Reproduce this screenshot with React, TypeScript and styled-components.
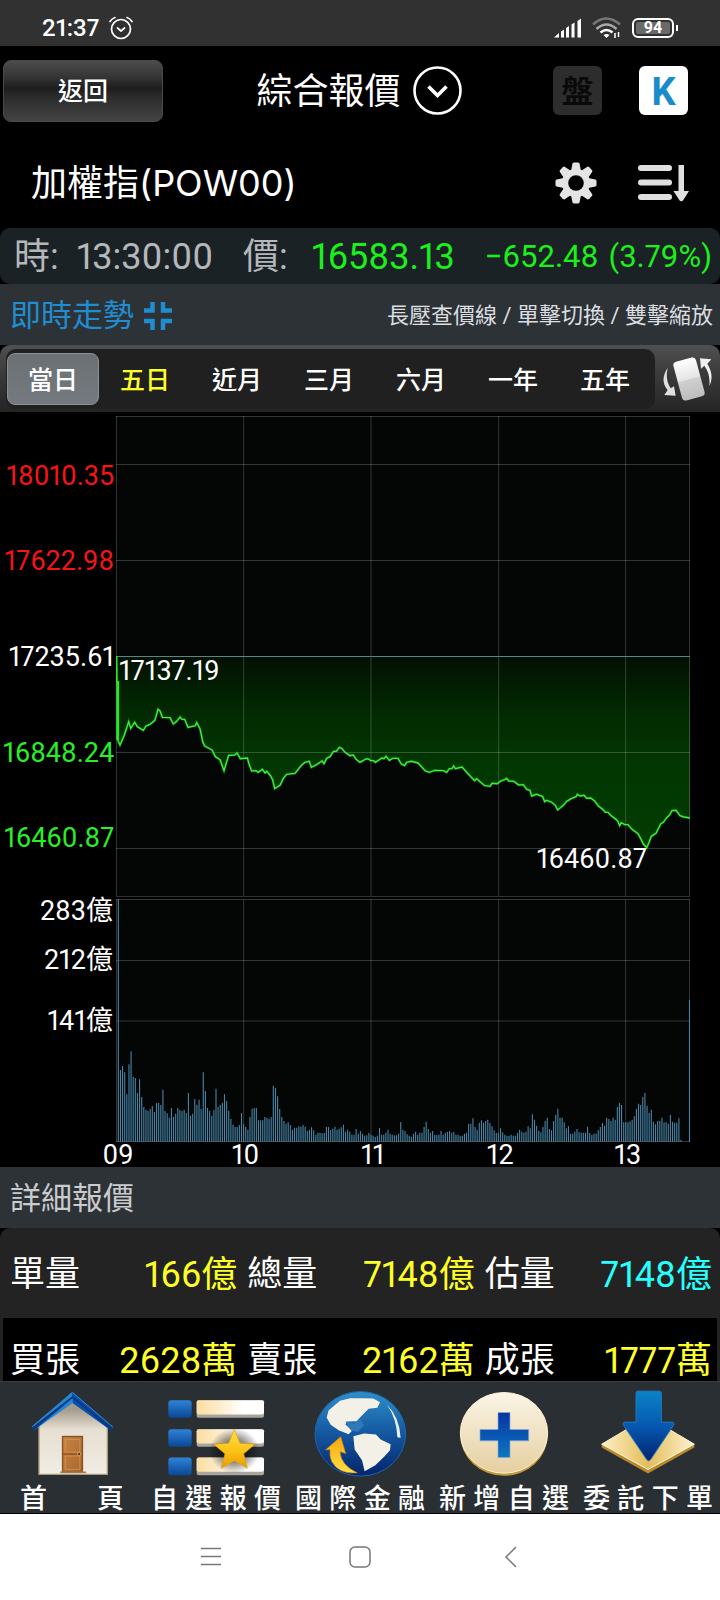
import React, { useState } from "react";
import styled, { createGlobalStyle } from "styled-components";

const GlobalStyle = createGlobalStyle`
  *, *::before, *::after { box-sizing: border-box; }
  body {
    margin: 0;
    background: #000;
    color: #fff;
    font-family: Roboto, "Noto Sans CJK TC", sans-serif;
    font-variant-numeric: proportional-nums;
  }
  button { font: inherit; color: inherit; background: none; border: 0; padding: 0; cursor: pointer; }
  h1, h2, p, dl, dt, dd { margin: 0; font-weight: 400; }
  svg { display: block; flex: none; }
`;

const Screen = styled.div`
  display: flex;
  flex-direction: column;
  min-height: 100vh;
  background: #000;
`;

/* ---------- status bar ---------- */

const StatusBar = styled.div`
  display: flex;
  align-items: center;
  justify-content: space-between;
  height: 46px;
  padding: 10px 42px 0 42px;
  background: #313131;
`;

const StatusGroup = styled.div<{ $gap: number }>`
  display: flex;
  align-items: center;
  gap: ${(p) => p.$gap}px;
`;

const Clock = styled.span`
  font-size: 24px;
  line-height: 32px;
  font-weight: 500;
`;

const Battery = styled.div`
  position: relative;
  display: flex;
  align-items: center;
  justify-content: center;
  width: 42px;
  height: 20px;
  margin-right: 4px;
  border: 2px solid #fff;
  border-radius: 6px;
  background: #6a6a6a;
  box-shadow: inset 0 0 0 2px #313131;
  font-size: 16px;
  line-height: 16px;
  font-weight: 700;
  &::after {
    content: "";
    position: absolute;
    right: -6px;
    width: 2px;
    height: 6px;
    background: #fff;
  }
`;

/* ---------- title area ---------- */

const Header = styled.header`
  display: grid;
  grid-template-columns: 1fr auto 1fr;
  align-items: center;
  height: 89px;
  padding: 0 3px;
`;

const BackButton = styled.button`
  width: 160px;
  height: 62px;
  padding-top: 3px;
  border: 1px solid #4a4a4a;
  border-radius: 8px;
  background: linear-gradient(#4c4c4c, #363636 25%, #1d1d1d 46%, #2a2a2a 58%, #444);
  font-size: 25px;
  line-height: 32px;
  font-weight: 500;
`;

const TitleGroup = styled.div`
  display: flex;
  align-items: center;
  gap: 12px;
  padding-right: 2px;
`;

const Title = styled.h1`
  padding-top: 3px;
  font-size: 36px;
  line-height: 48px;
`;

const SymbolName = styled.h2`
  font-family: Inter, "Noto Sans CJK TC", sans-serif;
  font-size: 36px;
  line-height: 48px;
`;

const Actions = styled.div<{ $gap: number; $end?: number }>`
  display: flex;
  align-items: center;
  justify-content: flex-end;
  gap: ${(p) => p.$gap}px;
  padding-right: ${(p) => p.$end ?? 0}px;
`;

const SquareButton = styled.button<{ $active?: boolean }>`
  display: flex;
  align-items: center;
  justify-content: center;
  width: 49px;
  height: 49px;
  padding-top: 2px;
  border-radius: 6px;
  background: ${(p) => (p.$active ? "#fff" : "#2d2d2d")};
  color: ${(p) => (p.$active ? "#1a8bcb" : "#0a0a0a")};
  font-size: ${(p) => (p.$active ? 38 : 32)}px;
  line-height: 48px;
  font-weight: 700;
`;

const SymbolRow = styled.div`
  display: flex;
  align-items: center;
  justify-content: space-between;
  height: 93px;
  padding: 2px 30px 0 31px;
`;

const QuoteBar = styled.div`
  display: flex;
  align-items: center;
  justify-content: space-between;
  height: 56px;
  padding: 2px 8px 0 14px;
  border-radius: 10px;
  background: #1b2226;
  color: #b4b8bb;
  font-size: 36px;
  line-height: 48px;
  white-space: nowrap;
`;

const QuoteItem = styled.span<{ $gap: number }>`
  display: flex;
  gap: ${(p) => p.$gap}px;
`;

const Price = styled.span`
  color: #1cf01c;
`;

const Change = styled(QuoteItem)`
  color: #1cf01c;
  font-size: 31px;
`;

/* ---------- section bars and range tabs ---------- */

const SectionBar = styled.div`
  display: flex;
  align-items: center;
  justify-content: space-between;
  height: 61px;
  padding: 2px 7px 0 10px;
  background: #2d3237;
`;

const SectionTitle = styled.h2<{ $accent?: boolean }>`
  display: flex;
  align-items: center;
  gap: 10px;
  color: ${(p) => (p.$accent ? "#1f8dd0" : "#c9cbcd")};
  font-size: 31px;
  line-height: 48px;
`;

const Hint = styled.p`
  color: #dcdee0;
  font-size: 22px;
  line-height: 32px;
`;

const RangeBar = styled.div`
  display: flex;
  align-items: center;
  height: 67px;
  padding: 0 7px 0 6px;
  border-radius: 10px 10px 0 0;
  background: linear-gradient(#505050, #3c3c3c 40%, #242424);
`;

const RangeTabs = styled.div`
  display: flex;
  flex: 1;
  height: 60px;
  padding: 4px 4px 4px 1px;
  border-radius: 10px;
  background: #202020;
`;

const RangeTab = styled.button<{ $selected: boolean; $highlight?: boolean }>`
  flex: 1;
  padding-top: 5px;
  border: 1px solid ${(p) => (p.$selected ? "#8b9094" : "transparent")};
  border-radius: 8px;
  background: ${(p) => (p.$selected ? "linear-gradient(#6b7074, #747a7f)" : "none")};
  color: ${(p) => (p.$highlight ? "#ffff28" : "#fff")};
  font-size: 25px;
  line-height: 32px;
  font-weight: 500;
`;

const RotateButton = styled.button`
  margin-left: 7px;
`;

/* ---------- charts ---------- */

const ChartRow = styled.div<{ $top: number }>`
  display: grid;
  grid-template-columns: 116px 1fr;
  padding-right: 30px;
  padding-top: ${(p) => p.$top}px;
`;

const AxisLabels = styled.div<{ $rows: string; $pad: number }>`
  display: grid;
  grid-template-rows: ${(p) => p.$rows};
  align-items: center;
  justify-items: end;
  padding: ${(p) => p.$pad}px 3px;
`;

const AxisLabel = styled.span<{ $color?: string }>`
  color: ${(p) => p.$color ?? "#fff"};
  font-size: 27px;
  line-height: 24px;
  white-space: nowrap;
`;

const Plot = styled.div<{ $height: number }>`
  position: relative;
  height: ${(p) => p.$height}px;
  svg { width: 100%; height: 100%; }
  svg * { vector-effect: non-scaling-stroke; }
`;

const HighMark = styled.span`
  position: absolute;
  left: 3px;
  top: 243px;
  font-size: 27px;
  line-height: 24px;
`;

const LowMark = styled(HighMark)`
  left: auto;
  right: 43px;
  top: 431px;
`;

const TimeAxis = styled.div`
  display: grid;
  grid-template-columns: repeat(5, 22.2%);
  margin: 0 28px 0 118px;
  height: 25px;
  padding-top: 1px;
`;

const TimeLabel = styled.span`
  transform: translateX(-50%);
  text-align: center;
  font-size: 27px;
  line-height: 24px;
`;

/* ---------- detail table ---------- */

const DetailPanel = styled.div`
  padding: 0 3px;
  border-radius: 10px 10px 0 0;
  background: #232323;
`;

const DetailRow = styled.dl<{ $dark?: boolean }>`
  display: grid;
  grid-template-columns: repeat(3, 1fr);
  column-gap: 10px;
  align-items: center;
  height: ${(p) => (p.$dark ? 63 : 90)}px;
  padding: ${(p) => (p.$dark ? 22 : 4)}px 5px 0 7px;
  background: ${(p) => (p.$dark ? "#000" : "none")};
  font-size: 35px;
  line-height: 40px;
`;

const DetailCell = styled.div`
  display: flex;
  align-items: center;
  justify-content: space-between;
  white-space: nowrap;
`;

const DetailValue = styled.dd<{ $color: string }>`
  color: ${(p) => p.$color};
  font-size: 36px;
`;

/* ---------- bottom bars ---------- */

const TabBar = styled.nav`
  display: grid;
  grid-template-columns: repeat(5, 1fr);
  height: 133px;
  padding-top: 8px;
  border-top: 1px solid #3a3f44;
  border-bottom: 1px solid #000;
  background: #2a2f33;
`;

const TabLink = styled.a<{ $inset?: number }>`
  display: flex;
  flex-direction: column;
  align-items: center;
  gap: 6px;
  padding: 0 ${(p) => p.$inset ?? 7}px;
  color: #fff;
  text-decoration: none;
  font-size: 27px;
  line-height: 32px;
  font-weight: 500;
  span { align-self: stretch; text-align: justify; text-align-last: justify; }
`;

const SystemNav = styled.div`
  display: flex;
  align-items: center;
  justify-content: space-around;
  flex: 1;
  min-height: 86px;
  padding: 0 136px;
  background: #fff;
`;

/* ---------- icons ---------- */

const AlarmIcon = () => (
  <svg width="24" height="24" viewBox="0 0 24 24" fill="none" stroke="#fff" strokeWidth="1.700" strokeLinecap="round" strokeLinejoin="round">
    <circle cx="12" cy="13" r="9.5" />
    <path d="M8.500 12l3.500 3 3.500-3M1 5.500q2-3 5-4M23 5.500q-2-3-5-4" />
  </svg>
);

const SignalIcon = () => (
  <svg width="28" height="20" viewBox="0 0 28 20" fill="#fff">
    <path d="M0 19.500L5 15v4.500zM7 13.500l3-2v8H7zM12 10l3-2v11.500h-3zM17.500 6.500l3-2v15h-3zM23.500 3l3.500-2.500v19h-3.500z" />
  </svg>
);

const WifiIcon = () => (
  <svg width="30" height="22" viewBox="0 0 30 22" fill="none" strokeWidth="2.600">
    <path d="M1 7.500q13-12 27 0" stroke="#777" />
    <path d="M4.500 12q10-9 20 0" stroke="#aaa" />
    <path d="M8.500 15.500q6-5 12 0" stroke="#fff" />
    <path d="M11.500 18q3-2 6 0l-3 3z" fill="#fff" />
    <path d="M23 16v5M26.500 15v5" stroke="#fff" strokeWidth="1.500" />
  </svg>
);

const ChevronCircle = () => (
  <svg width="49" height="49" viewBox="0 0 49 49" fill="none" stroke="#fff">
    <circle cx="24.500" cy="24.500" r="23" strokeWidth="2.600" />
    <path d="M15.500 20.500l9 9 9-9" strokeWidth="3.600" />
  </svg>
);

const GearIcon = () => (
  <svg width="42" height="42" viewBox="-21 -21 42 42" fill="#e4e4e4">
    {[0, 45, 90, 135].map((a) => (
      <path key={a} transform={`rotate(${a})`} d="M-5 -12L-3.500 -19.500Q-3 -20.500 -2 -20.500H2Q3 -20.500 3.500 -19.500L5 -12V12L3.500 19.500Q3 20.500 2 20.500H-2Q-3 20.500 -3.500 19.500L-5 12z" />
    ))}
    <circle r="14" />
    <circle r="7.800" fill="#000" />
  </svg>
);

const SortIcon = () => (
  <svg width="52" height="38" viewBox="0 0 52 38" fill="#e0e0e0">
    <rect x="0" y="1" width="34" height="6" rx="3" />
    <rect x="0" y="15.500" width="34" height="6" rx="3" />
    <rect x="0" y="30" width="34" height="6" rx="3" />
    <path d="M40.500 1h5.500v26h5L45 36.500q-1.700 1.500-3.400 0L35.500 27h5z" />
  </svg>
);

const CollapseIcon = () => (
  <svg width="28" height="28" viewBox="0 0 28 28" fill="none" stroke="#1f8dd0" strokeWidth="4.500">
    <path d="M8.500 0v8.500H0M19 0v8.500h9M8.500 28v-9H0M19 28v-9h9" />
  </svg>
);

const RotateIcon = () => (
  <svg width="51" height="49" viewBox="905 402 153 147">
    <defs>
      <linearGradient id="device" x1="0" y1="0" x2="0" y2="1">
        <stop offset="0" stopColor="#fff" />
        <stop offset="0.500" stopColor="#e4e4e4" />
        <stop offset="0.520" stopColor="#cfcfcf" />
        <stop offset="1" stopColor="#bdbdbd" />
      </linearGradient>
    </defs>
    <rect x="951" y="417" width="70" height="120" rx="11" transform="rotate(-15 986 477)" fill="url(#device)" />
    <path d="M922 443Q897 482 922 510L912 525L946 527L941 499L931 505Q914 480 922 443z" fill="#e0e0e0" />
    <path d="M1047 498Q1063 467 1041 431L1053 418L1019 415L1022 446L1032 437Q1051 462 1047 498z" fill="#f0f0f0" />
  </svg>
);

const HomeIcon = () => (
  <svg width="83" height="87" viewBox="90 60 250 260">
    <defs>
      <linearGradient id="wall" x1="0" y1="0" x2="0" y2="1">
        <stop offset="0.150" stopColor="#a39c8e" />
        <stop offset="0.420" stopColor="#e6dfd2" />
        <stop offset="1" stopColor="#f1ede3" />
      </linearGradient>
      <linearGradient id="door" x1="0" y1="0" x2="1" y2="1">
        <stop offset="0" stopColor="#c98545" />
        <stop offset="1" stopColor="#a8662b" />
      </linearGradient>
    </defs>
    <path d="M114 165L215 82L320 165V313H114z" fill="url(#wall)" stroke="#a99c7b" strokeWidth="4" />
    <path d="M94 169L215 65V98L98 181z" fill="#2485d3" />
    <path d="M215 65L337 171L332 182L215 98z" fill="#0a4fae" />
    <path d="M98 181L215 84L332 182L337 173L215 77L94 171z" fill="#063b83" />
    <path d="M94 169L215 66L337 171" fill="none" stroke="#2f8cd6" strokeWidth="3" />
    <rect x="185" y="199" width="60" height="107" fill="url(#door)" stroke="#8a4f1c" strokeWidth="4" />
    <path d="M193 208h44v38h-44zM193 258h44v40h-44z" fill="none" stroke="#d79b5d" strokeWidth="2" />
    <path d="M187 252h44" stroke="#7c4517" strokeWidth="3" />
    <circle cx="235" cy="252" r="5" fill="#5c3310" stroke="#e6c08c" strokeWidth="2" />
    <path d="M178 307h78" stroke="#a57c4b" strokeWidth="5" />
  </svg>
);

const STAR = "M703 178L720 219L765 222L731 251L742 294L703 272L664 294L675 251L641 222L686 219z";

const ListIcon = () => (
  <svg width="98" height="87" viewBox="501 60 294 260">
    <defs>
      <linearGradient id="tile" x1="0" y1="0" x2="0" y2="1">
        <stop offset="0" stopColor="#2f83d8" />
        <stop offset="1" stopColor="#0b4794" />
      </linearGradient>
      <linearGradient id="strip">
        <stop offset="0.050" stopColor="#fbdfa6" />
        <stop offset="0.700" stopColor="#fff" />
      </linearGradient>
      <linearGradient id="star" x1="0" y1="0" x2="0" y2="1">
        <stop offset="0" stopColor="#ffe14a" />
        <stop offset="0.600" stopColor="#fbbf12" />
        <stop offset="1" stopColor="#e39b05" />
      </linearGradient>
      <radialGradient id="starShade">
        <stop offset="0.500" stopColor="#000" stopOpacity="0.450" />
        <stop offset="1" stopColor="#000" stopOpacity="0" />
      </radialGradient>
    </defs>
    {[90, 177, 262].map((y) => (
      <g key={y}>
        <rect x="505" y={y} width="70" height="53" rx="9" fill="url(#tile)" />
        <rect x="590" y={y} width="202" height="53" rx="6" fill="#a8a59d" />
        <rect x="590" y={y} width="202" height="43" rx="6" fill="url(#strip)" />
      </g>
    ))}
    <ellipse cx="703" cy="242" rx="76" ry="68" fill="url(#starShade)" />
    <path d={STAR} fill="url(#star)" stroke="#e4a10a" strokeWidth="2" strokeLinejoin="round" />
  </svg>
);

const GlobeIcon = () => (
  <svg width="93" height="87" viewBox="940 60 279 260">
    <defs>
      <linearGradient id="sea" x1="0" y1="0" x2="0" y2="1">
        <stop offset="0" stopColor="#2e8fc9" />
        <stop offset="0.500" stopColor="#14579f" />
        <stop offset="1" stopColor="#04246b" />
      </linearGradient>
      <linearGradient id="curl" x1="0" y1="0" x2="0" y2="1">
        <stop offset="0" stopColor="#f6a80a" />
        <stop offset="1" stopColor="#ffe04a" />
      </linearGradient>
    </defs>
    <ellipse cx="1079" cy="191" rx="136" ry="127" fill="url(#sea)" stroke="#1c64ad" strokeWidth="3" />
    <path d="M1018 92L1048 84H1088L1118 85L1138 96L1130 113L1104 116L1083 137L1068 153L1040 154L1034 162L1054 182L1044 192L1014 180L990 164L978 142L984 120z" fill="#f3f0e8" />
    <path d="M1058 198L1090 190L1126 193L1140 208L1170 222L1168 240L1152 258L1124 285L1092 303L1084 270L1062 238z" fill="#f3f0e8" />
    <path d="M1034 153L1058 160L1080 147L1090 165L1072 185L1052 182z" fill="#2f79b8" />
    <path d="M1159 104Q1196 140 1200 203L1190 201Q1188 145 1159 104z" fill="#e6f3fb" />
    <path d="M1020 200L1035 250L1018 244Q1020 285 1070 308Q1016 314 993 274Q986 256 988 238L975 239z" fill="url(#curl)" stroke="#d98e05" strokeWidth="2" />
  </svg>
);

const PlusIcon = () => (
  <svg width="90" height="87" viewBox="300 60 270 260">
    <defs>
      <linearGradient id="coin" x1="0" y1="0" x2="0" y2="1">
        <stop offset="0" stopColor="#fbf5e7" />
        <stop offset="1" stopColor="#e5cf9f" />
      </linearGradient>
      <linearGradient id="cross" x1="0" y1="0" x2="0" y2="1">
        <stop offset="0" stopColor="#0633a3" />
        <stop offset="1" stopColor="#0c78c0" />
      </linearGradient>
    </defs>
    <ellipse cx="435" cy="195" rx="131" ry="122" fill="#c0993e" />
    <ellipse cx="435" cy="188" rx="131" ry="121" fill="url(#coin)" stroke="#fff3d0" strokeWidth="3" />
    <path d="M417 127h36v51h56v34h-56v50h-36v-50h-54v-34h54z" fill="url(#cross)" stroke="#88a9d6" strokeWidth="2" />
  </svg>
);

const OrderIcon = () => (
  <svg width="94" height="87" viewBox="719 60 282 260">
    <defs>
      <linearGradient id="plate" x1="0" y1="0" x2="1" y2="0">
        <stop offset="0" stopColor="#fdf0c6" />
        <stop offset="0.500" stopColor="#e3bd5a" />
        <stop offset="1" stopColor="#fdf3d2" />
      </linearGradient>
      <linearGradient id="down" x1="0" y1="0" x2="0" y2="1">
        <stop offset="0" stopColor="#0b82c6" />
        <stop offset="0.500" stopColor="#0559b0" />
        <stop offset="1" stopColor="#03226f" />
      </linearGradient>
    </defs>
    <path d="M721 222V232L860 310L999 232V222z" fill="#b8892a" />
    <path d="M860 140L999 222L860 298L721 222z" fill="url(#plate)" stroke="#fff6d8" strokeWidth="3" />
    <path d="M830 63H894Q900 63 900 69V156H932Q942 157 936 166L868 268Q862 276 856 268L787 166Q782 157 791 156H824V69Q824 63 830 63z" fill="url(#down)" stroke="#1f78c4" strokeWidth="3" />
  </svg>
);

/* ---------- data ---------- */

const RANGES = ["當日", "五日", "近月", "三月", "六月", "一年", "五年"];

// Index trace, on the 1722 x 1440 grid of the price plot.
const TRACE: [number, number][] = [
  [5, 972], [12, 987], [24, 960], [32, 937], [38, 917], [44, 937], [56, 919], [64, 932], [82, 943], [90, 930], [102, 925],
  [116, 914], [120, 902], [126, 880], [132, 885], [139, 904], [162, 905], [172, 924], [182, 916], [192, 903], [198, 910],
  [206, 910], [216, 934], [238, 929], [242, 920], [252, 938], [256, 957], [260, 977], [266, 990], [288, 1002], [298, 1022],
  [312, 1031], [324, 1064], [338, 1018], [356, 1017], [363, 1011], [373, 1028], [394, 1026], [400, 1047], [407, 1065],
  [420, 1064], [427, 1069], [439, 1060], [447, 1071], [452, 1066], [464, 1080], [470, 1092], [476, 1118], [492, 1108],
  [502, 1087], [512, 1075], [537, 1072], [557, 1047], [567, 1039], [580, 1036], [586, 1054], [602, 1046], [618, 1035],
  [624, 1043], [632, 1027], [642, 1022], [652, 1007], [662, 1005], [670, 994], [678, 998], [687, 1009], [702, 1019],
  [712, 1017], [720, 1030], [732, 1039], [750, 1029], [758, 1029], [764, 1034], [772, 1034], [778, 1039], [798, 1026],
  [804, 1028], [810, 1021], [820, 1033], [830, 1027], [846, 1027], [856, 1044], [866, 1049], [872, 1039], [886, 1036],
  [906, 1041], [918, 1054], [928, 1065], [940, 1069], [956, 1063], [982, 1064], [992, 1069], [1000, 1058], [1008, 1058],
  [1013, 1050], [1018, 1058], [1038, 1053], [1052, 1069], [1066, 1084], [1076, 1094], [1082, 1088], [1092, 1097],
  [1106, 1109], [1122, 1111], [1128, 1102], [1144, 1103], [1154, 1095], [1166, 1091], [1172, 1087], [1178, 1095],
  [1194, 1096], [1208, 1107], [1222, 1106], [1232, 1120], [1242, 1123], [1247, 1140], [1262, 1135], [1280, 1142],
  [1286, 1157], [1292, 1153], [1306, 1158], [1318, 1168], [1325, 1182], [1342, 1168], [1352, 1156], [1366, 1148],
  [1380, 1142], [1384, 1135], [1392, 1140], [1404, 1138], [1412, 1147], [1424, 1146], [1436, 1155], [1448, 1171],
  [1460, 1180], [1468, 1189], [1476, 1189], [1484, 1198], [1500, 1210], [1506, 1217], [1511, 1229], [1516, 1220],
  [1526, 1226], [1536, 1226], [1548, 1240], [1566, 1253], [1574, 1268], [1582, 1284], [1592, 1295], [1600, 1277],
  [1606, 1261], [1620, 1252], [1634, 1224], [1642, 1219], [1652, 1205], [1660, 1198], [1668, 1184], [1680, 1183],
  [1692, 1199], [1704, 1203], [1722, 1206],
];

// One traded-volume bar per minute, full scale 729.
const VOLUME = [
  729, 216, 228, 209, 143, 233, 272, 196, 192, 147, 188, 135, 105, 97, 93, 100, 108, 90, 117, 117,
  111, 157, 93, 86, 73, 102, 75, 85, 102, 96, 93, 97, 87, 147, 79, 85, 129, 112, 127, 99,
  209, 153, 102, 94, 79, 96, 160, 106, 112, 118, 143, 123, 94, 69, 52, 45, 45, 51, 87, 53,
  45, 37, 75, 100, 102, 102, 65, 65, 65, 75, 72, 69, 75, 169, 163, 137, 99, 75, 63, 55,
  59, 51, 37, 43, 43, 47, 46, 51, 46, 33, 37, 44, 35, 22, 28, 28, 26, 27, 45, 45,
  36, 40, 46, 37, 40, 44, 52, 31, 37, 31, 22, 22, 39, 25, 33, 25, 19, 20, 27, 22,
  19, 15, 19, 42, 22, 22, 28, 37, 25, 22, 20, 20, 25, 60, 37, 33, 23, 19, 16, 25,
  31, 22, 28, 28, 45, 61, 39, 28, 33, 21, 21, 22, 33, 22, 28, 30, 33, 28, 30, 22,
  22, 19, 19, 25, 28, 55, 55, 71, 45, 37, 58, 65, 58, 63, 67, 57, 47, 35, 27, 28,
  41, 29, 22, 19, 19, 22, 19, 19, 27, 37, 31, 28, 31, 47, 41, 83, 67, 49, 34, 29,
  45, 63, 73, 39, 35, 63, 82, 100, 73, 73, 59, 41, 47, 25, 25, 31, 39, 29, 28, 28,
  28, 46, 27, 21, 25, 25, 35, 45, 57, 49, 73, 69, 63, 73, 67, 105, 117, 111, 59, 59,
  59, 62, 67, 77, 100, 115, 111, 135, 147, 109, 87, 97, 61, 53, 63, 64, 73, 59, 59, 55,
  81, 61, 58, 58, 71, 7, 0, 0, 0, 427,
];

const HOUR_LINES = "M1.500 0V1440M383 0V1440M765 0V1440M1148 0V1440M1529 0V1440M1720.500 0V1440";
const trace = TRACE.map((p) => p.join(" ")).join("L");
const bars = VOLUME.map((h, i) => `M${(7 + i * 6.37).toFixed(1)} 729v${-h}`).join("");

const DETAILS = [
  [["單量", "166億", "#ffff28"], ["總量", "7148億", "#ffff28"], ["估量", "7148億", "#28ffff"]],
  [["買張", "2628萬", "#ffff28"], ["賣張", "2162萬", "#ffff28"], ["成張", "1777萬", "#ffff28"]],
];

const TABS = [
  { label: "首頁", icon: <HomeIcon />, inset: 20 },
  { label: "自選報價", icon: <ListIcon /> },
  { label: "國際金融", icon: <GlobeIcon /> },
  { label: "新增自選", icon: <PlusIcon /> },
  { label: "委託下單", icon: <OrderIcon /> },
];

const PriceChart = () => (
  <ChartRow $top={4}>
    <AxisLabels $rows="84fr 84fr 108fr 84fr 84fr" $pad={18}>
      <AxisLabel $color="#f81414">18010.35</AxisLabel>
      <AxisLabel $color="#f81414">17622.98</AxisLabel>
      <AxisLabel>17235.61</AxisLabel>
      <AxisLabel $color="#28f028">16848.24</AxisLabel>
      <AxisLabel $color="#28f028">16460.87</AxisLabel>
    </AxisLabels>
    <Plot $height={482}>
      <svg viewBox="0 0 1722 1446" preserveAspectRatio="none" fill="none">
        <defs>
          <linearGradient id="loss" gradientUnits="userSpaceOnUse" x1="0" y1="720" x2="0" y2="1290">
            <stop offset="0" stopColor="#021002" />
            <stop offset="0.300" stopColor="#022a02" />
            <stop offset="0.550" stopColor="#023602" />
            <stop offset="1" stopColor="#023c02" />
          </linearGradient>
        </defs>
        <rect width="1722" height="1441" fill="#040605" />
        <path d={`M3 720L${trace}V720z`} fill="url(#loss)" />
        <path d={`${HOUR_LINES}M0 1.500H1722M0 145.500H1722M0 433.500H1722M0 1009.500H1722M0 1297.500H1722M0 1441.500H1722`} stroke="#fff" strokeOpacity="0.190" />
        <path d="M0 721.500H1722" stroke="#5a8488" />
        <path d="M0 720L1 800M5 795V972" stroke="#24e824" strokeWidth="3" />
        <path d={`M${trace}`} stroke="#1c8a1c" strokeOpacity="0.400" strokeWidth="3" />
        <path d={`M${trace}`} stroke="#3cf03c" strokeWidth="1.400" />
      </svg>
      <HighMark>17137.19</HighMark>
      <LowMark>16460.87</LowMark>
    </Plot>
  </ChartRow>
);

const VolumeChart = () => (
  <ChartRow $top={1}>
    <AxisLabels $rows="24fr 74fr 48fr 97fr" $pad={0}>
      <AxisLabel>283億</AxisLabel>
      <AxisLabel>212億</AxisLabel>
      <AxisLabel>141億</AxisLabel>
    </AxisLabels>
    <Plot $height={243}>
      <svg viewBox="0 0 1722 729" preserveAspectRatio="none" fill="none">
        <rect width="1722" height="729" fill="#040605" />
        <path d={`${HOUR_LINES}M0 1.500H1722M0 184.500H1722M0 366H1722M0 727.500H1722`} stroke="#fff" strokeOpacity="0.190" />
        <path d={bars} stroke="#4885a8" strokeWidth="1.100" />
      </svg>
    </Plot>
  </ChartRow>
);

export default function App() {
  const [range, setRange] = useState(RANGES[0]);
  return (
    <Screen>
      <GlobalStyle />
      <StatusBar>
        <StatusGroup $gap={10}>
          <Clock>21:37</Clock>
          <AlarmIcon />
        </StatusGroup>
        <StatusGroup $gap={10}>
          <SignalIcon />
          <WifiIcon />
          <Battery>94</Battery>
        </StatusGroup>
      </StatusBar>

      <Header>
        <div>
          <BackButton>返回</BackButton>
        </div>
        <TitleGroup>
          <Title>綜合報價</Title>
          <button aria-label="切換頁面">
            <ChevronCircle />
          </button>
        </TitleGroup>
        <Actions $gap={37} $end={29}>
          <SquareButton>盤</SquareButton>
          <SquareButton $active>K</SquareButton>
        </Actions>
      </Header>

      <SymbolRow>
        <SymbolName>加權指(POW00)</SymbolName>
        <Actions $gap={41}>
          <button aria-label="設定">
            <GearIcon />
          </button>
          <button aria-label="排序">
            <SortIcon />
          </button>
        </Actions>
      </SymbolRow>

      <QuoteBar>
        <QuoteItem $gap={30}>
          <QuoteItem $gap={18}>
            <span>時:</span>
            <span>13:30:00</span>
          </QuoteItem>
          <QuoteItem $gap={24}>
            <span>價:</span>
            <Price>16583.13</Price>
          </QuoteItem>
        </QuoteItem>
        <Change $gap={10}>
          <span>−652.48</span>
          <span>(3.79%)</span>
        </Change>
      </QuoteBar>

      <SectionBar>
        <SectionTitle $accent>
          即時走勢
          <CollapseIcon />
        </SectionTitle>
        <Hint>長壓查價線 / 單擊切換 / 雙擊縮放</Hint>
      </SectionBar>

      <RangeBar>
        <RangeTabs role="tablist">
          {RANGES.map((r) => (
            <RangeTab
              key={r}
              role="tab"
              aria-selected={r === range}
              $selected={r === range}
              $highlight={r === "五日"}
              onClick={() => setRange(r)}
            >
              {r}
            </RangeTab>
          ))}
        </RangeTabs>
        <RotateButton aria-label="旋轉螢幕">
          <RotateIcon />
        </RotateButton>
      </RangeBar>

      <PriceChart />
      <VolumeChart />
      <TimeAxis>
        {["09", "10", "11", "12", "13"].map((t) => (
          <TimeLabel key={t}>{t}</TimeLabel>
        ))}
      </TimeAxis>

      <SectionBar>
        <SectionTitle>詳細報價</SectionTitle>
      </SectionBar>
      <DetailPanel>
        {DETAILS.map((row, i) => (
          <DetailRow key={i} $dark={i === 1}>
            {row.map(([label, value, color]) => (
              <DetailCell key={label}>
                <dt>{label}</dt>
                <DetailValue $color={color}>{value}</DetailValue>
              </DetailCell>
            ))}
          </DetailRow>
        ))}
      </DetailPanel>

      <TabBar>
        {TABS.map((t) => (
          <TabLink key={t.label} href="#" $inset={t.inset}>
            {t.icon}
            <span>{t.label}</span>
          </TabLink>
        ))}
      </TabBar>

      <SystemNav>
        <button aria-label="最近使用">
          <svg width="22" height="22" viewBox="0 0 22 22" stroke="#777" strokeWidth="1.500">
            <path d="M1 2.500h20M1 10.500h20M1 18.500h20" />
          </svg>
        </button>
        <button aria-label="主畫面">
          <svg width="22" height="22" viewBox="0 0 22 22" fill="none" stroke="#777" strokeWidth="1.500">
            <rect x="1" y="1" width="20" height="20" rx="5" />
          </svg>
        </button>
        <button aria-label="返回上一頁">
          <svg width="22" height="22" viewBox="0 0 22 22" fill="none" stroke="#777" strokeWidth="1.500">
            <path d="M18 1L8 11l10 10" />
          </svg>
        </button>
      </SystemNav>
    </Screen>
  );
}
